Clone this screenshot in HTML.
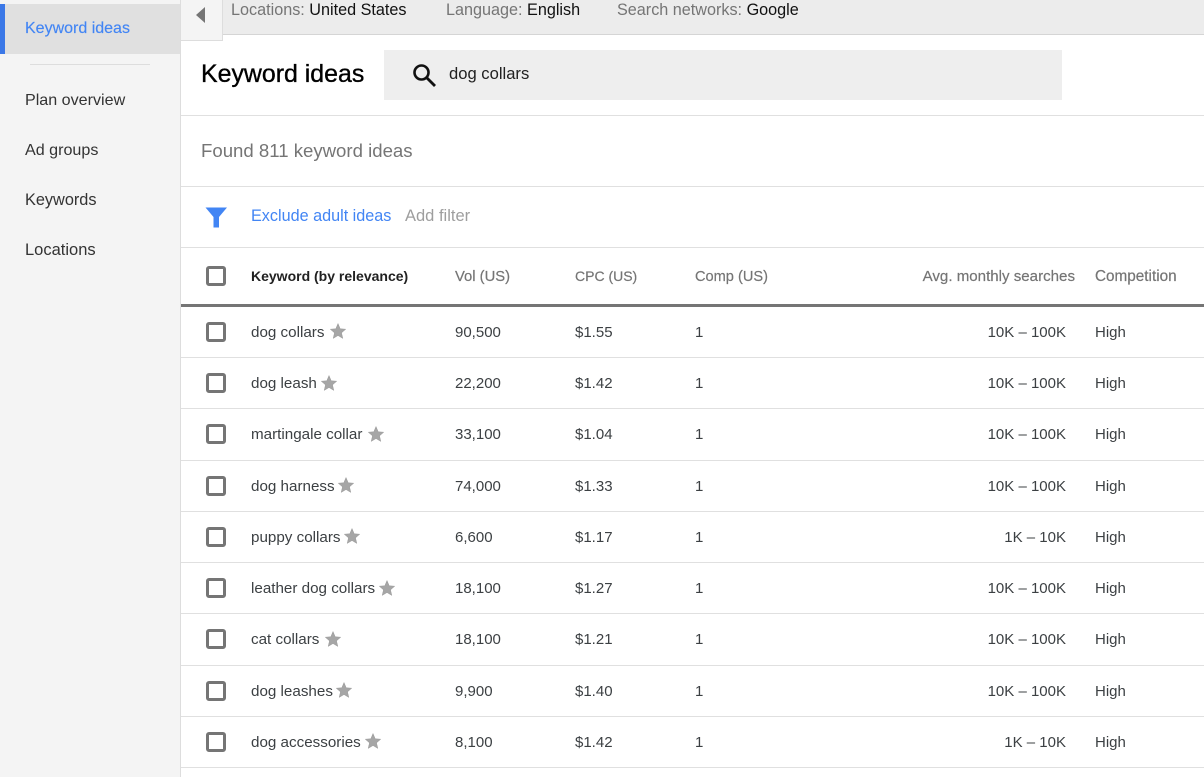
<!DOCTYPE html>
<html><head><meta charset="utf-8"><style>
html,body{margin:0;padding:0;width:1204px;height:777px;overflow:hidden;background:#fff;font-family:"Liberation Sans",sans-serif;font-size:15px;color:#3c4043}
.a{position:absolute;white-space:nowrap}
.t{position:absolute;white-space:nowrap;line-height:22px;height:22px}
.n{font-size:15.200px}
.h{color:#757575;-webkit-text-stroke:.2px #757575}
.ln{position:absolute;left:181px;width:1023px;height:1px;background:#e0e0e0}
.cb{position:absolute;left:206px;width:20px;height:20px;box-sizing:border-box;border:3px solid #757575;border-radius:3px;background:#fff}
.s{position:absolute;width:16px;height:16px}
.r{text-align:right;width:120px;left:946px}
.nav{position:absolute;left:25px;font-size:16.100px;line-height:20px;color:#333}
</style></head><body>
<div class="a" style="left:0;top:0;width:180px;height:777px;background:#f4f4f4"></div>
<div class="a" style="left:180px;top:0;width:1px;height:777px;background:#ddd"></div>
<div class="a" style="left:0;top:4px;width:180px;height:50px;background:#e0e0e0"></div>
<div class="a" style="left:0;top:4px;width:5px;height:50px;background:#3b78e7"></div>
<div class="nav" style="top:19px;color:#4285f4;font-size:16px;-webkit-text-stroke:.15px #4285f4">Keyword ideas</div>
<div class="a" style="left:30px;top:64px;width:120px;height:1px;background:#ddd"></div>
<div class="nav" style="top:90px">Plan overview</div>
<div class="nav" style="top:140px">Ad groups</div>
<div class="nav" style="top:190px;font-size:16.300px">Keywords</div>
<div class="nav" style="top:240px;font-size:16.500px">Locations</div>

<div class="a" style="left:181px;top:0;width:1023px;height:34px;background:#ececec;border-bottom:1px solid #d5d5d5"></div>
<div class="a" style="left:181px;top:0;width:41px;height:40px;background:#f4f4f4;border-right:1px solid #ddd;border-bottom:1px solid #ddd"></div>
<svg class="a" style="left:196px;top:7px" width="9" height="17"><path d="M9 0V16L0 8Z" fill="#757575"/></svg>
<div class="t" style="left:231px;top:-1px;font-size:16.200px;color:#757575">Locations: <span style="color:#111">United States</span></div>
<div class="t" style="left:446px;top:-1px;font-size:16.200px;color:#757575">Language: <span style="color:#111">English</span></div>
<div class="t" style="left:617px;top:-1px;font-size:16.200px;color:#757575">Search networks: <span style="color:#111">Google</span></div>

<div class="a" style="left:201px;top:59px;font-size:24.900px;line-height:30px;color:#000;-webkit-text-stroke:.35px #000">Keyword ideas</div>
<div class="a" style="left:384px;top:50px;width:678px;height:50px;background:#eee"></div>
<svg class="a" style="left:410px;top:61px" width="28" height="28" viewBox="0 0 28 28"><circle cx="11.500" cy="11.500" r="7" fill="none" stroke="#111" stroke-width="2.600"/><path d="M16.500 16.500L25 25" stroke="#111" stroke-width="2.800"/></svg>
<div class="t" style="left:449px;top:63px;font-size:16.600px;color:#212121">dog collars</div>
<div class="ln" style="top:115px"></div>
<div class="t" style="left:201px;top:140px;font-size:18.600px;color:#757575">Found 811 keyword ideas</div>
<div class="ln" style="top:186px"></div>
<svg class="a" style="left:205px;top:207px" width="23" height="21"><path d="M0.5 0.5H22L14 10V20.5H8.500V10Z" fill="#4285f4"/></svg>
<div class="t" style="left:251px;top:205px;font-size:16.200px;color:#4285f4">Exclude adult ideas</div>
<div class="t" style="left:405px;top:205px;font-size:16.500px;color:#9e9e9e">Add filter</div>
<div class="ln" style="top:247px"></div>

<div class="cb" style="top:266px"></div>
<div class="t" style="left:251px;top:265px;font-size:14px;font-weight:700;color:#212121">Keyword (by relevance)</div>
<div class="t h" style="left:455px;top:266px;font-size:14.800px">Vol (US)</div>
<div class="t h" style="left:575px;top:265px;font-size:14px">CPC (US)</div>
<div class="t h" style="left:695px;top:266px;font-size:14.600px">Comp (US)</div>
<div class="t h" style="left:875px;width:200px;text-align:right;top:266px;font-size:15.100px">Avg. monthly searches</div>
<div class="t h" style="left:1095px;top:266px;font-size:15.300px">Competition</div>
<div class="a" style="left:181px;top:304px;width:1023px;height:3px;background:#757575"></div>

<svg width="0" height="0" style="position:absolute"><defs><path id="st" d="M8 .5L10.200 5.800L15.700 6.200L11.500 9.900L12.800 15.400L8 12.500L3.200 15.400L4.500 9.900L.3 6.200L5.800 5.800Z" fill="#a6a6a6" stroke="#9a9a9a" stroke-width=".5"/></defs></svg>

<div class="cb" style="top:322px"></div><div class="t n" style="left:251px;top:322px">dog collars</div><svg class="s" style="left:330px;top:323px"><use href="#st"/></svg><div class="t" style="left:455px;top:322px">90,500</div><div class="t" style="left:575px;top:322px">$1.55</div><div class="t" style="left:695px;top:322px">1</div><div class="t r" style="top:322px">10K – 100K</div><div class="t" style="left:1095px;top:322px">High</div><div class="ln" style="top:357px"></div>
<div class="cb" style="top:373px"></div><div class="t n" style="left:251px;top:373px">dog leash</div><svg class="s" style="left:321px;top:375px"><use href="#st"/></svg><div class="t" style="left:455px;top:373px">22,200</div><div class="t" style="left:575px;top:373px">$1.42</div><div class="t" style="left:695px;top:373px">1</div><div class="t r" style="top:373px">10K – 100K</div><div class="t" style="left:1095px;top:373px">High</div><div class="ln" style="top:408px"></div>
<div class="cb" style="top:424px"></div><div class="t n" style="left:251px;top:424px">martingale collar</div><svg class="s" style="left:368px;top:426px"><use href="#st"/></svg><div class="t" style="left:455px;top:424px">33,100</div><div class="t" style="left:575px;top:424px">$1.04</div><div class="t" style="left:695px;top:424px">1</div><div class="t r" style="top:424px">10K – 100K</div><div class="t" style="left:1095px;top:424px">High</div><div class="ln" style="top:460px"></div>
<div class="cb" style="top:476px"></div><div class="t n" style="left:251px;top:476px">dog harness</div><svg class="s" style="left:338px;top:477px"><use href="#st"/></svg><div class="t" style="left:455px;top:476px">74,000</div><div class="t" style="left:575px;top:476px">$1.33</div><div class="t" style="left:695px;top:476px">1</div><div class="t r" style="top:476px">10K – 100K</div><div class="t" style="left:1095px;top:476px">High</div><div class="ln" style="top:511px"></div>
<div class="cb" style="top:527px"></div><div class="t n" style="left:251px;top:527px">puppy collars</div><svg class="s" style="left:344px;top:528px"><use href="#st"/></svg><div class="t" style="left:455px;top:527px">6,600</div><div class="t" style="left:575px;top:527px">$1.17</div><div class="t" style="left:695px;top:527px">1</div><div class="t r" style="top:527px">1K – 10K</div><div class="t" style="left:1095px;top:527px">High</div><div class="ln" style="top:562px"></div>
<div class="cb" style="top:578px"></div><div class="t n" style="left:251px;top:578px">leather dog collars</div><svg class="s" style="left:379px;top:580px"><use href="#st"/></svg><div class="t" style="left:455px;top:578px">18,100</div><div class="t" style="left:575px;top:578px">$1.27</div><div class="t" style="left:695px;top:578px">1</div><div class="t r" style="top:578px">10K – 100K</div><div class="t" style="left:1095px;top:578px">High</div><div class="ln" style="top:613px"></div>
<div class="cb" style="top:629px"></div><div class="t n" style="left:251px;top:629px">cat collars</div><svg class="s" style="left:325px;top:631px"><use href="#st"/></svg><div class="t" style="left:455px;top:629px">18,100</div><div class="t" style="left:575px;top:629px">$1.21</div><div class="t" style="left:695px;top:629px">1</div><div class="t r" style="top:629px">10K – 100K</div><div class="t" style="left:1095px;top:629px">High</div><div class="ln" style="top:665px"></div>
<div class="cb" style="top:681px"></div><div class="t n" style="left:251px;top:681px">dog leashes</div><svg class="s" style="left:336px;top:682px"><use href="#st"/></svg><div class="t" style="left:455px;top:681px">9,900</div><div class="t" style="left:575px;top:681px">$1.40</div><div class="t" style="left:695px;top:681px">1</div><div class="t r" style="top:681px">10K – 100K</div><div class="t" style="left:1095px;top:681px">High</div><div class="ln" style="top:716px"></div>
<div class="cb" style="top:732px"></div><div class="t n" style="left:251px;top:732px">dog accessories</div><svg class="s" style="left:365px;top:733px"><use href="#st"/></svg><div class="t" style="left:455px;top:732px">8,100</div><div class="t" style="left:575px;top:732px">$1.42</div><div class="t" style="left:695px;top:732px">1</div><div class="t r" style="top:732px">1K – 10K</div><div class="t" style="left:1095px;top:732px">High</div><div class="ln" style="top:767px"></div>
</body></html>
